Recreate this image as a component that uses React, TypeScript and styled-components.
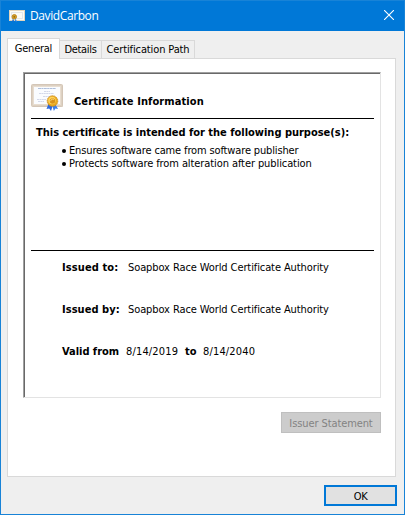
import React from 'react';
import styled, { createGlobalStyle } from 'styled-components';

const Global = createGlobalStyle`
  * { box-sizing: border-box; }
  body { margin: 0; overflow: hidden; background: #efefef; }
`;

const Dialog = styled.div`
  width: 405px;
  height: 515px;
  display: flex;
  flex-direction: column;
  background: #efefef;
  border: 1px solid #1883d7;
  color: #000;
  font: 11px/13px 'DejaVu Sans Condensed', 'DejaVu Sans', sans-serif;
  font-stretch: condensed;
`;

const TitleBar = styled.header`
  height: 30px;
  flex: none;
  display: flex;
  align-items: center;
  padding: 0 10px 0 8px;
  background: #0078d7;
  color: #fff;
`;

const Caption = styled.h1`
  flex: 1;
  margin: 0 0 0 5px;
  font: 12px/16px 'Open Sans', 'Noto Sans', sans-serif;
  letter-spacing: -0.4px;
`;

const CloseButton = styled.button`
  display: flex;
  padding: 0 0 2px;
  border: 0;
  background: none;
`;

const Body = styled.main`
  display: flex;
  flex-direction: column;
  padding: 7px 7px 0 6px;
`;

const Tabs = styled.nav`
  height: 20px;
  display: flex;
  align-items: flex-end;
`;

const Tab = styled.button<{ $width: number; $active?: boolean }>`
  width: ${(p) => p.$width}px;
  height: ${(p) => (p.$active ? 21 : 18)}px;
  margin-bottom: ${(p) => (p.$active ? -1 : 0)}px;
  position: relative;
  padding: 0 0 ${(p) => (p.$active ? 1 : 0)}px;
  border: 1px solid #d9d9d9;
  border-bottom: 0;
  border-left-width: ${(p) => (p.$active ? 1 : 0)}px;
  background: ${(p) => (p.$active ? '#fff' : '#efefef')};
  color: #000;
  font: inherit;
  white-space: nowrap;
`;

const Page = styled.section`
  height: 419px;
  width: 389px;
  display: flex;
  flex-direction: column;
  padding: 13px 14px 0 15px;
  border: 1px solid #d9d9d9;
  background: #fff;
`;

const Certificate = styled.article`
  height: 326px;
  border: 1px solid #a0a0a0;
  border-right-color: #e3e3e3;
  border-bottom-color: #e3e3e3;
`;

const Sheet = styled.div`
  height: 100%;
  border: 1px solid #696969;
  border-right: 0;
  border-bottom: 0;
  padding: 0 6px;
`;

const Heading = styled.div`
  height: 44px;
  display: flex;
  align-items: flex-start;
  padding-top: 9px;
`;

const Label = styled.strong<{ $track?: number }>`
  font-weight: bold;
  white-space: pre;
  letter-spacing: ${(p) => p.$track ?? 0}px;
`;

const Value = styled.span<{ $track?: number }>`
  white-space: pre;
  letter-spacing: ${(p) => p.$track ?? 0}px;
`;

const HeadingText = styled.div`
  margin: 12px 0 0 11px;
`;

const Rule = styled.hr`
  height: 1px;
  width: 343px;
  margin: 0;
  border: 0;
  background: #000;
`;

const Purposes = styled.div`
  height: 131px;
  padding: 7px 0 0 5px;
`;

const PurposeList = styled.ul`
  margin: 5px 0 0;
  padding: 0 0 0 26px;
  list-style: none;
`;

const Purpose = styled.li`
  display: flex;
  align-items: center;
  gap: 3px;
  height: 13px;
  &::before {
    content: '';
    width: 4px;
    height: 4px;
    border-radius: 50%;
    background: #000;
  }
`;

const Details = styled.div`
  display: flex;
  flex-direction: column;
  gap: 29px;
  padding: 10px 0 0 31px;
`;

const Field = styled.div<{ $column: number; $second?: number }>`
  display: grid;
  grid-template-columns: ${(p) => p.$column}px ${(p) => (p.$second ? `${p.$second}px 18px` : '')} auto;
  height: 13px;
`;

const StatementButton = styled.button`
  align-self: flex-end;
  width: 100px;
  height: 21px;
  margin: 14px 0 0;
  padding: 1px 0 0;
  border: 1px solid #bfbfbf;
  background: #ccc;
  color: #838383;
  font: inherit;
`;

const OkButton = styled.button`
  align-self: flex-end;
  width: 73px;
  height: 21px;
  margin: 8px 0 0;
  padding: 1px 0 0;
  border: 2px solid #0078d7;
  background: #e1e1e1;
  color: #000;
  font: inherit;
`;

const SmallCertificateIcon = () => (
  <svg width="16" height="16" viewBox="0 0 16 16">
    <rect x="0.5" y="2.5" width="15" height="10" fill="#fbfbf8" stroke="#e3d5bd" />
    <path d="M2.5 4.5h11v6h-11z" fill="none" stroke="#d9dce1" strokeWidth="0.7" />
    <path d="M4 10l-1 4 2-1z" fill="#1765d0" />
    <path d="M6.500 10l1.500 4-2-1z" fill="#2d84ef" />
    <circle cx="5.3" cy="8.8" r="2.3" fill="#d6a126" stroke="#b67c16" strokeWidth="0.8" />
    <circle cx="5.3" cy="8.8" r="0.9" fill="#926815" />
  </svg>
);

const CertificateIcon = () => (
  <svg width="32" height="30" viewBox="0 0 32 30">
    <rect x="1" y="2" width="31" height="22" rx="1" fill="#dcd3ca" />
    <rect x="0.5" y="1.5" width="31" height="22" rx="1" fill="#e8ddd0" stroke="#d4c6b7" />
    <rect x="1.5" y="2.5" width="29" height="20" fill="none" stroke="#c9bbab" strokeDasharray="1 1" strokeWidth="0.7" />
    <rect x="3" y="4" width="26" height="17" fill="#fafcff" />
    <path d="M7 5.5h18" stroke="#9caed1" strokeWidth="0.8" strokeDasharray="3 0.4 2 0.4" />
    <path d="M13 8.500h6M8 10.500h15M12 13.500h7M6 16.500h9M7 18.500h6" stroke="#c1c9df" strokeWidth="0.7" strokeDasharray="2 0.4" />
    <path d="M17.800 20l-2.300 6 2.700-.4 1.800 2.500 2-6z" fill="#2d68dd" />
    <path d="M24 20.500l3 5.500-2.600-.4-1.500 2.500-1.900-6z" fill="#397fec" />
    <circle cx="21.500" cy="18" r="5.300" fill="#e9aa20" stroke="#c98716" strokeWidth="0.8" strokeDasharray="1.5 0.5" />
    <circle cx="21" cy="17.500" r="3.700" fill="#ffd45c" />
    <circle cx="21.500" cy="18" r="2.700" fill="#d8921a" />
    <path d="M19.800 18.200a1.800 1.800 0 0 1 3-1.600" fill="none" stroke="#ffe48c" strokeWidth="0.8" />
  </svg>
);

const CloseIcon = () => (
  <svg width="10" height="10" viewBox="0 0 10 10">
    <path d="M0 0L10 10M10 0L0 10" fill="none" stroke="#fff" strokeWidth="1.1" />
  </svg>
);

export default function App() {
  return (
    <>
      <Global />
      <Dialog>
        <TitleBar>
          <SmallCertificateIcon />
          <Caption>DavidCarbon</Caption>
          <CloseButton aria-label="Close"><CloseIcon /></CloseButton>
        </TitleBar>
        <Body>
          <Tabs>
            <Tab $width={53} $active><Value $track={-0.25}>General</Value></Tab>
            <Tab $width={42}><Value $track={-0.3}>Details</Value></Tab>
            <Tab $width={93}><Value $track={-0.12}>Certification Path</Value></Tab>
          </Tabs>
          <Page>
            <Certificate>
              <Sheet>
                <Heading>
                  <CertificateIcon />
                  <HeadingText><Label $track={0.09}>Certificate Information</Label></HeadingText>
                </Heading>
                <Rule />
                <Purposes>
                  <Label $track={-0.01}>This certificate is intended for the following purpose(s):</Label>
                  <PurposeList>
                    <Purpose><Value $track={-0.14}>Ensures software came from software publisher</Value></Purpose>
                    <Purpose><Value $track={-0.09}>Protects software from alteration after publication</Value></Purpose>
                  </PurposeList>
                </Purposes>
                <Rule />
                <Details>
                  <Field $column={66}>
                    <Label $track={0.1}>Issued to:</Label>
                    <Value $track={-0.1}>Soapbox Race World Certificate Authority</Value>
                  </Field>
                  <Field $column={66}>
                    <Label $track={0.05}>Issued by:</Label>
                    <Value $track={-0.1}>Soapbox Race World Certificate Authority</Value>
                  </Field>
                  <Field $column={64} $second={59}>
                    <Label $track={-0.03}>Valid from</Label>
                    <Value $track={0.15}>8/14/2019</Value>
                    <Label>to</Label>
                    <Value $track={0.15}>8/14/2040</Value>
                  </Field>
                </Details>
              </Sheet>
            </Certificate>
            <StatementButton disabled><Value $track={-0.1}>Issuer Statement</Value></StatementButton>
          </Page>
          <OkButton><Value $track={-0.5}>OK</Value></OkButton>
        </Body>
      </Dialog>
    </>
  );
}
